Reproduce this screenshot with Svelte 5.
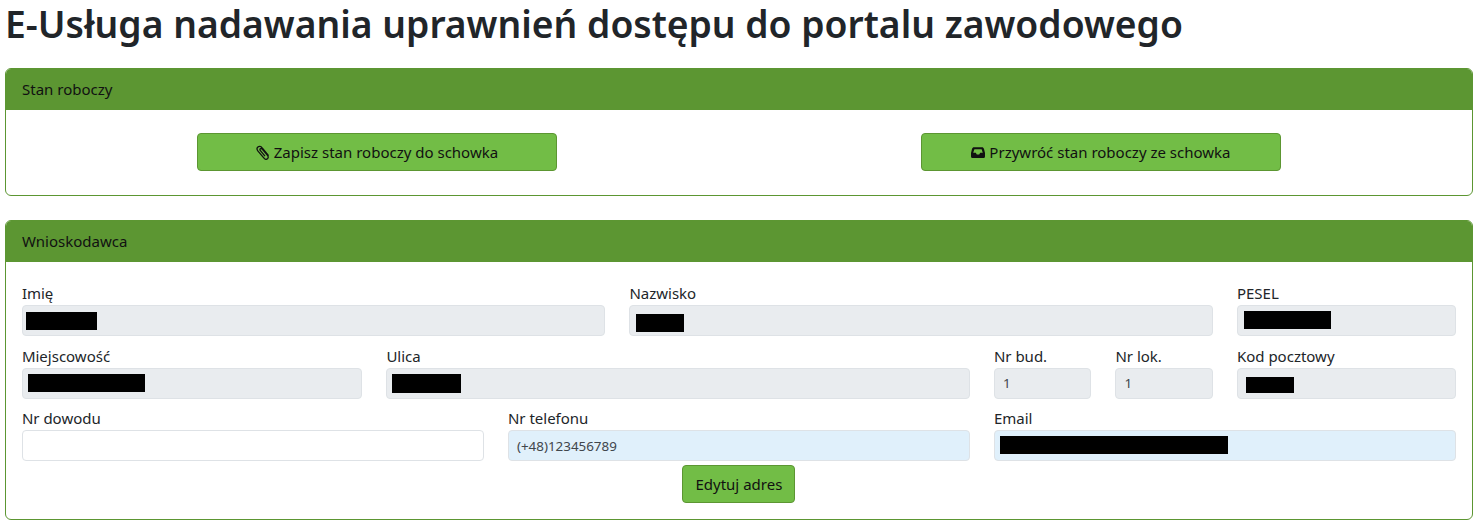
<script>
  // grey = read-only, blue = prefilled, plain = empty
  // black: redaction bar, x/y offsets inside the field
  const rows = [
    [
      { label: 'Imię', span: 5, kind: 'grey', black: { x: 3, y: 6, w: 71, h: 18 } },
      { label: 'Nazwisko', span: 5, kind: 'grey', black: { x: 6, y: 8, w: 48, h: 18 } },
      { label: 'PESEL', span: 2, kind: 'grey', black: { x: 6, y: 5, w: 87, h: 18 } }
    ],
    [
      { label: 'Miejscowość', span: 3, kind: 'grey', black: { x: 5, y: 5, w: 117, h: 18 } },
      { label: 'Ulica', span: 5, kind: 'grey', black: { x: 5, y: 5, w: 69, h: 19 } },
      { label: 'Nr bud.', span: 1, kind: 'grey', value: '1' },
      { label: 'Nr lok.', span: 1, kind: 'grey', value: '1' },
      { label: 'Kod pocztowy', span: 2, kind: 'grey', black: { x: 8, y: 8, w: 48, h: 16 } }
    ],
    [
      { label: 'Nr dowodu', span: 4, kind: 'plain' },
      { label: 'Nr telefonu', span: 4, kind: 'blue', value: '(+48)123456789' },
      { label: 'Email', span: 4, kind: 'blue', black: { x: 5, y: 5, w: 228, h: 18 } }
    ]
  ];
</script>

<div class="page">
  <h1>E-Usługa nadawania uprawnień dostępu do portalu zawodowego</h1>

  <section class="card">
    <header>Stan roboczy</header>
    <div class="body actions">
      <button class="btn wide">
        <svg class="ico clip" viewBox="0 0 14 15" aria-hidden="true"><path d="M12.6 10.6 6 2.6C4.9 1.2 3 1 1.9 2 .8 3 .9 4.8 2 6.2L8 13.2C9 14.4 10.5 14.5 11.5 13.7 12.5 12.9 12.4 11.5 11.5 10.4L6.2 4.2C5.6 3.5 4.8 3.4 4.3 3.8 3.8 4.2 3.8 5 4.4 5.7L9 11.1"/></svg>
        Zapisz stan roboczy do schowka
      </button>
      <button class="btn wide">
        <svg class="ico tray" viewBox="0 0 14 11" aria-hidden="true"><path fill-rule="evenodd" d="M3 .3H11C12 .3 12.6 .9 13 2L14 6V9.5A1.5 1.5 0 0 1 12.5 11H1.5A1.5 1.5 0 0 1 0 9.5V6L1 2C1.4 .9 2 .3 3 .3ZM3.4 2.2H10.6L11.8 5.8H9.2L8.2 7.4H5.8L4.8 5.8H2.2Z"/></svg>
        Przywróć stan roboczy ze schowka
      </button>
    </div>
  </section>

  <section class="card">
    <header>Wnioskodawca</header>
    <div class="body form">
      {#each rows as row}
        <div class="row">
          {#each row as f}
            <div class="field" style="grid-column: span {f.span}">
              <span class="label">{f.label}</span>
              <div class="input {f.kind}">
                {#if f.value}{f.value}{/if}
                {#if f.black}
                  <i class="black" style="left: {f.black.x}px; top: {f.black.y}px; width: {f.black.w}px; height: {f.black.h}px"></i>
                {/if}
              </div>
            </div>
          {/each}
        </div>
      {/each}
      <div class="center">
        <button class="btn">Edytuj adres</button>
      </div>
    </div>
  </section>
</div>

<style>
  :global(body) {
    margin: 0;
    background: #fff;
    color: #212529;
    font-family: "Noto Sans", "Open Sans", "Liberation Sans", sans-serif;
    font-size: 15px;
  }

  .page {
    padding: 0 5px;
  }

  h1 {
    margin: 0 0 20px;
    font-size: 37.25px;
    line-height: 48px;
    font-weight: 600;
  }

  .card {
    border: 1px solid #5c9632;
    border-radius: 6px;
    margin-bottom: 24px;
    overflow: hidden;
  }

  .card header {
    height: 41px;
    box-sizing: border-box;
    background: #5c9632;
    padding: 0 16px 2px;
    display: flex;
    align-items: center;
    color: #111;
  }

  .actions {
    display: flex;
    justify-content: space-between;
    padding: 23px 191px 24px;
  }

  .form {
    padding: 22px 16.1px 16px 15.9px;
  }

  .row {
    display: grid;
    grid-template-columns: repeat(12, 1fr);
    column-gap: 24px;
    margin-bottom: 10.5px;
  }

  .field {
    min-width: 0;
  }

  .label {
    display: block;
    height: 21px;
    line-height: 18px;
  }

  .input {
    position: relative;
    height: 31px;
    box-sizing: border-box;
    border: 1px solid #dee2e6;
    border-radius: 4px;
    padding: 0 8px;
    display: flex;
    align-items: center;
    font-size: 13.4px;
    color: #40464c;
  }

  .grey {
    background: #e9ecef;
  }

  .blue {
    background: #e0f0fb;
  }

  .black {
    position: absolute;
    background: #000;
  }

  .btn {
    height: 38px;
    box-sizing: border-box;
    padding: 0 12px;
    border: 1px solid #5c9632;
    border-radius: 4px;
    background: #72bd46;
    color: #111;
    font-family: inherit;
    font-size: 15px;
  }

  .wide {
    width: 360px;
  }

  .ico {
    fill: #111;
  }

  .clip {
    width: 14px;
    height: 15px;
    vertical-align: -2px;
    fill: none;
    stroke: #111;
    stroke-width: 1.3;
  }

  .tray {
    width: 14px;
    height: 11px;
    vertical-align: 0;
  }

  .center {
    display: flex;
    justify-content: center;
    margin-top: -6.5px;
  }
</style>
